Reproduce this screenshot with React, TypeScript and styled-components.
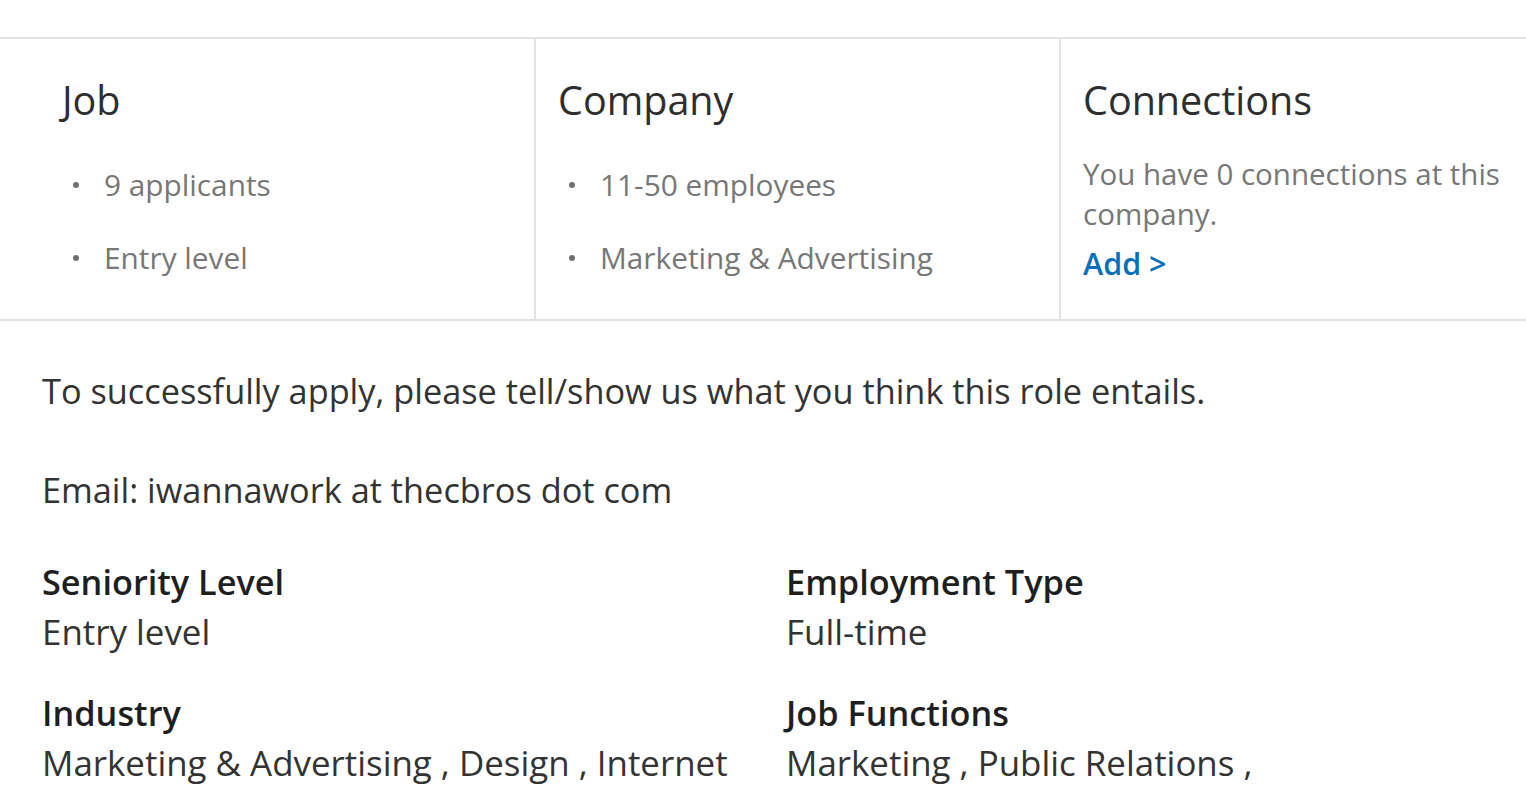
import React from 'react';
import styled, { createGlobalStyle } from 'styled-components';

const GlobalStyle = createGlobalStyle`
  html, body {
    margin: 0;
    padding: 0;
    background: #ffffff;
    font-family: "Open Sans", "Noto Sans", sans-serif;
    overflow: hidden;
  }
`;

const Page = styled.div`
  padding-top: 37px;
  width: 1526px;
`;

const Summary = styled.section`
  box-sizing: border-box;
  display: grid;
  grid-template-columns: 534px 525px 1fr;
  height: 284px;
  border-top: 2px solid #e3e3e3;
  border-bottom: 2px solid #e3e3e3;
`;

const Column = styled.div<{ $first?: boolean }>`
  padding: 38px 0 0 ${(p) => (p.$first ? '62px' : '22px')};
  border-left: ${(p) => (p.$first ? 'none' : '2px solid #e3e3e3')};
  min-width: 0;
`;

const ColumnTitle = styled.h3`
  margin: 0;
  font-size: 39.5px;
  font-weight: 400;
  line-height: 46px;
  color: #2e2e2e;
  white-space: nowrap;
`;

const BulletList = styled.ul`
  list-style: none;
  margin: 42px 0 0;
  padding: 0;
  display: flex;
  flex-direction: column;
  gap: 33px;
`;

const BulletItem = styled.li`
  display: flex;
  align-items: center;
  font-size: 29.8px;
  line-height: 40px;
  color: #777777;
  white-space: nowrap;

  &::before {
    content: '';
    width: 6px;
    height: 6px;
    border-radius: 50%;
    background: #6f6f6f;
    margin: 0 25px 0 11px;
    flex: none;
  }
`;

const ConnectionsText = styled.p`
  margin: 31px 0 0;
  font-size: 29.5px;
  line-height: 40px;
  color: #777777;
  max-width: 440px;
`;

const AddLink = styled.a`
  display: inline-block;
  margin-top: 11px;
  font-size: 30.5px;
  line-height: 36px;
  font-weight: 600;
  color: #0a6fb8;
  text-decoration: none;
`;

const Description = styled.div`
  padding: 47px 0 0 42px;
  color: #333333;
  font-size: 34.3px;
  line-height: 46px;
`;

const Paragraph = styled.p`
  margin: 0 0 53px;
  white-space: nowrap;

  &:last-of-type {
    margin-bottom: 44px;
  }
`;

const Criteria = styled.dl`
  display: grid;
  grid-template-columns: 744px 1fr;
  row-gap: 31px;
  margin: 0;
`;

const CriteriaItem = styled.div`
  display: flex;
  flex-direction: column;
`;

const Label = styled.dt`
  font-size: 34.3px;
  line-height: 50px;
  font-weight: 600;
  color: #1f1f1f;
  white-space: nowrap;
`;

const Value = styled.dd`
  margin: 0;
  font-size: 34.9px;
  line-height: 50px;
  color: #333333;
  white-space: nowrap;
`;

const criteria = [
  { label: 'Seniority Level', value: 'Entry level' },
  { label: 'Employment Type', value: 'Full-time' },
  { label: 'Industry', value: 'Marketing & Advertising , Design , Internet' },
  { label: 'Job Functions', value: 'Marketing , Public Relations ,' },
];

export default function App() {
  return (
    <>
      <GlobalStyle />
      <Page>
        <Summary>
          <Column $first>
            <ColumnTitle>Job</ColumnTitle>
            <BulletList>
              <BulletItem>9 applicants</BulletItem>
              <BulletItem>Entry level</BulletItem>
            </BulletList>
          </Column>
          <Column>
            <ColumnTitle>Company</ColumnTitle>
            <BulletList>
              <BulletItem>11-50 employees</BulletItem>
              <BulletItem>Marketing &amp; Advertising</BulletItem>
            </BulletList>
          </Column>
          <Column>
            <ColumnTitle>Connections</ColumnTitle>
            <ConnectionsText>You have 0 connections at this company.</ConnectionsText>
            <AddLink href="#">Add &gt;</AddLink>
          </Column>
        </Summary>
        <Description>
          <Paragraph>To successfully apply, please tell/show us what you think this role entails.</Paragraph>
          <Paragraph>Email: iwannawork at thecbros dot com</Paragraph>
          <Criteria>
            {criteria.map((c) => (
              <CriteriaItem key={c.label}>
                <Label>{c.label}</Label>
                <Value>{c.value}</Value>
              </CriteriaItem>
            ))}
          </Criteria>
        </Description>
      </Page>
    </>
  );
}
